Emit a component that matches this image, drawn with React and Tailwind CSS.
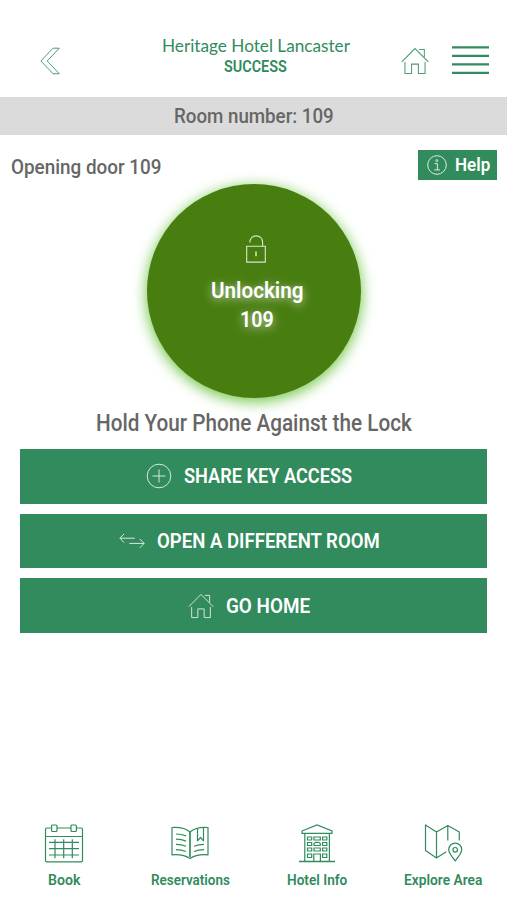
import { useLayoutEffect, useRef, useState } from "react";
import clsx from "clsx";

// Squeezes its text horizontally to the width of the box
const FitText = ({ children, className }) => {
  const boxRef = useRef(null);
  const textRef = useRef(null);
  const [scale, setScale] = useState(1);

  useLayoutEffect(() => {
    setScale(boxRef.current.offsetWidth / textRef.current.offsetWidth);
  }, [children]);

  return (
    <span
      ref={boxRef}
      className={clsx("flex shrink-0 whitespace-nowrap", className)}
    >
      <span
        ref={textRef}
        className="block shrink-0 origin-left"
        style={{ transform: `scaleX(${scale})` }}
      >
        {children}
      </span>
    </span>
  );
};

const BackIcon = () => (
  <svg className="h-7 w-5 opacity-85" viewBox="0 0 20 28" fill="none" stroke="currentColor" strokeWidth="1">
    <path d="M13 1.2h6.3L7.2 14l12.1 12.7H13L.9 14z" />
  </svg>
);

const HomeIcon = ({ className }) => (
  <svg className={className} viewBox="0 0 27 27" fill="none" stroke="currentColor" strokeWidth="1">
    <path d="M.7 14.3 13.5 1.5l12.8 12.8" />
    <path d="M17.5 2.5h5v7.500" />
    <path d="M3.8 14.5v11h6.4v-9h6.6v9h6.4v-11" />
  </svg>
);

const MenuIcon = () => (
  <svg className="h-7 w-[37px]" viewBox="0 0 37 28" fill="none" stroke="currentColor" strokeWidth="2.3">
    <path d="M0 1.3h37M0 9.8h37M0 18.400h37M0 26.900h37" />
  </svg>
);

const InfoIcon = () => (
  <svg className="size-5 opacity-85" viewBox="0 0 20 20" fill="none" stroke="currentColor" strokeWidth="1">
    <circle cx="10" cy="10" r="9.3" />
    <circle cx="9.8" cy="5.6" r="1" />
    <path d="M7.6 8.6h2.8v6.2M7.2 14.9h5.8" />
  </svg>
);

const UnlockIcon = () => (
  <svg className="h-7 w-5 opacity-80" viewBox="0 0 20 28" fill="none" stroke="currentColor" strokeWidth="1.1">
    <path d="M.7 11.3h18.6v15.8H.7z" />
    <path d="M3.9 7.5C3.9 3.6 6.4.9 10.2.9s6.4 2.7 6.4 6.6v3.8" />
    <path d="M10 16.5v4.8" strokeWidth="1.5" />
  </svg>
);

const PlusIcon = () => (
  <svg className="size-[26px] opacity-80" viewBox="0 0 26 26" fill="none" stroke="currentColor" strokeWidth="1">
    <circle cx="13" cy="13" r="11.8" />
    <path d="M13 6.5v13M6.5 13h13" />
  </svg>
);

const SwapIcon = () => (
  <svg className="h-4 w-[26px] opacity-80" viewBox="0 0 26 16" fill="none" stroke="currentColor" strokeWidth="1">
    <path d="M15.7 5.2H.9M5.2.8.9 5.2l4.3 4.4" />
    <path d="M10.3 10.4h14.8M20.8 6l4.3 4.4-4.3 4.4" />
  </svg>
);

const CalendarIcon = () => (
  <svg className="size-10" viewBox="0 0 40 40" fill="none" stroke="currentColor" strokeWidth="1.2">
    <path d="M7.5 5H2.8A1.3 1.3 0 0 0 1.5 6.3v31.2a1.3 1.3 0 0 0 1.3 1.3h34.4a1.3 1.3 0 0 0 1.3-1.3V6.3A1.3 1.3 0 0 0 37.2 5h-4.7M13 5h14M1.5 13.5h37" />
    <rect x="7.6" y="2" width="5.4" height="6.5" rx="1" />
    <rect x="27" y="2" width="5.4" height="6.5" rx="1" />
    <path d="M5 19.3h30M5 25.7h30M5 32h30M11 16.3v19M19.7 16.3v19M28.3 16.3v19" />
  </svg>
);

const BookIcon = () => (
  <svg className="size-10" viewBox="0 0 40 40" fill="none" stroke="currentColor" strokeWidth="1.2" strokeLinejoin="round">
    <path d="M20 9C16 5.5 9 4 2 4.5v27.3c7-.5 14 .8 18 3.8 4-3 11-4.3 18-3.8V4.5c-7-.5-14 1-18 4.5z" />
    <path d="M20 9v25" strokeWidth="1.7" />
    <path d="M6 11c3.5 0 7 .6 10 1.9M6 16.2c3.5 0 7 .6 10 1.9M6 21.4c3.5 0 7 .6 10 1.9M6 26.6c3.5 0 7 .6 10 1.9" />
    <path d="M34 21.4c-3.5 0-7 .6-10 1.9M34 26.6c-3.5 0-7 .6-10 1.9" />
    <path d="M27.5 5.5v12.3l3-3.3 3 3.3V4.5" />
  </svg>
);

const HotelIcon = () => (
  <svg className="size-10" viewBox="0 0 40 40" fill="none" stroke="currentColor" strokeWidth="1.2">
    <path d="M2 38.4h36" strokeWidth="1.5" />
    <path d="M5 8 20 2l15 6v2.4H5z" />
    <path d="M7.8 10.4v28M32.4 10.4v28" />
    <path d="M10.5 14h4.2v3h-4.2zM17 14h6.3v3H17zM25.6 14h4.2v3h-4.2z" />
    <path d="M10.5 19.5h4.2v3h-4.2zM17 22.5v-2l1.5-1.2h3.3l1.5 1.2v2zM25.6 19.5h4.2v3h-4.2z" />
    <path d="M10.5 25h4.2v3h-4.2zM17 25h6.3v3H17zM25.6 25h4.2v3h-4.2z" />
    <path d="M10.5 31h4.2v3.5h-4.2zM25.6 31h4.2v3.5h-4.2zM16.8 38v-7h6.6v7" />
  </svg>
);

const MapIcon = () => (
  <svg className="size-10" viewBox="0 0 40 40" fill="none" stroke="currentColor" strokeWidth="1.2" strokeLinejoin="round">
    <path d="M24.800 17.500V2.500L13.500 9 2.500 2v25.500L13.500 35l9.700-6.200M13.500 9v26M24.800 2.500 36.300 9v8.500" />
    <path d="M32.200 37.800c-3.800-4.600-6.500-7.500-6.500-11.200a6.500 6.500 0 0 1 13 0c0 3.700-2.700 6.600-6.500 11.200z" />
    <circle cx="32.2" cy="26.8" r="2.3" />
  </svg>
);

const actions = [
  { label: "SHARE KEY ACCESS", icon: <PlusIcon />, width: "w-[168px]", offset: "pl-[126px]" },
  { label: "OPEN A DIFFERENT ROOM", icon: <SwapIcon />, width: "w-[223px]", offset: "pl-[99px]" },
  { label: "GO HOME", icon: <HomeIcon className="size-[26px] opacity-80" />, width: "w-[84px]", offset: "pl-[168px]" },
];

const tabs = [
  { label: "Book", icon: <CalendarIcon />, width: "w-[32px]" },
  { label: "Reservations", icon: <BookIcon />, width: "w-[79px]" },
  { label: "Hotel Info", icon: <HotelIcon />, width: "w-[60px]" },
  { label: "Explore Area", icon: <MapIcon />, width: "w-[78px]" },
];

const App = () => {
  return (
    <div className="flex h-[900px] w-[507px] flex-col overflow-hidden bg-white font-['Roboto',sans-serif] font-medium text-[#666]">
      <header className="flex h-[97px] shrink-0 items-start text-[#318b5c]">
        <button className="ml-10 mt-[47px]">
          <BackIcon />
        </button>
        <div className="ml-[101.5px] mt-[35px] flex w-[188px] flex-col items-center">
          <FitText className="w-[188px] font-['Lato',sans-serif] text-[17px] leading-[21px] font-normal">
            Heritage Hotel Lancaster
          </FitText>
          <FitText className="w-[63px] text-base leading-[22px] font-semibold">
            SUCCESS
          </FitText>
        </div>
        <button className="ml-[51.5px] mt-[47px]">
          <HomeIcon className="size-[28px] opacity-85" />
        </button>
        <button className="ml-[23px] mt-[46px]">
          <MenuIcon />
        </button>
      </header>

      <div className="flex h-[38px] shrink-0 items-center justify-center bg-[#dbdbdb] text-xl">
        <FitText className="w-[160px]">Room number: 109</FitText>
      </div>

      <main className="flex flex-1 flex-col items-center">
        <div className="flex h-[49px] w-full items-start justify-between pl-[11px] pr-2.5 pt-[15px]">
          <FitText className="mt-0.5 w-[151px] text-xl leading-[30px]">
            Opening door 109
          </FitText>
          <button className="flex h-[30px] w-[79px] items-center gap-2 bg-[#318b5c] pl-[9px] text-white">
            <InfoIcon />
            <FitText className="w-[35px] text-[19px] font-semibold">Help</FitText>
          </button>
        </div>

        <button className="flex size-[214px] shrink-0 flex-col items-center rounded-full bg-[#487d10] pt-[51px] text-[22px] leading-[29px] font-semibold text-white shadow-[0_3px_14px_1px_#78c850]">
          <span className="ml-[5px]">
            <UnlockIcon />
          </span>
          <span className="ml-[7px] mt-[13px] flex flex-col items-center [text-shadow:0_2px_10px_rgba(255,255,255,0.7)]">
            <FitText className="w-[93px]">Unlocking</FitText>
            <FitText className="w-[34px]">109</FitText>
          </span>
        </button>

        <FitText className="mt-[9px] w-[316px] text-[23px] leading-[34px]">
          Hold Your Phone Against the Lock
        </FitText>

        <div className="mt-[8px] flex w-[467px] flex-col gap-2.5">
          {actions.map((action) => (
            <button
              key={action.label}
              className={clsx(
                "flex h-[54.7px] items-center gap-3 bg-[#318b5c] text-xl font-semibold text-white",
                action.offset
              )}
            >
              {action.icon}
              <FitText className={action.width}>{action.label}</FitText>
            </button>
          ))}
        </div>
      </main>

      <nav className="ml-px grid h-[77px] w-[505px] shrink-0 grid-cols-4 text-[#318b5c]">
        {tabs.map((tab) => (
          <button key={tab.label} className="flex flex-col items-center">
            {tab.icon}
            <FitText className={clsx("mt-[7px] text-[15px] leading-5 font-semibold", tab.width)}>
              {tab.label}
            </FitText>
          </button>
        ))}
      </nav>
    </div>
  );
};

export default App;
